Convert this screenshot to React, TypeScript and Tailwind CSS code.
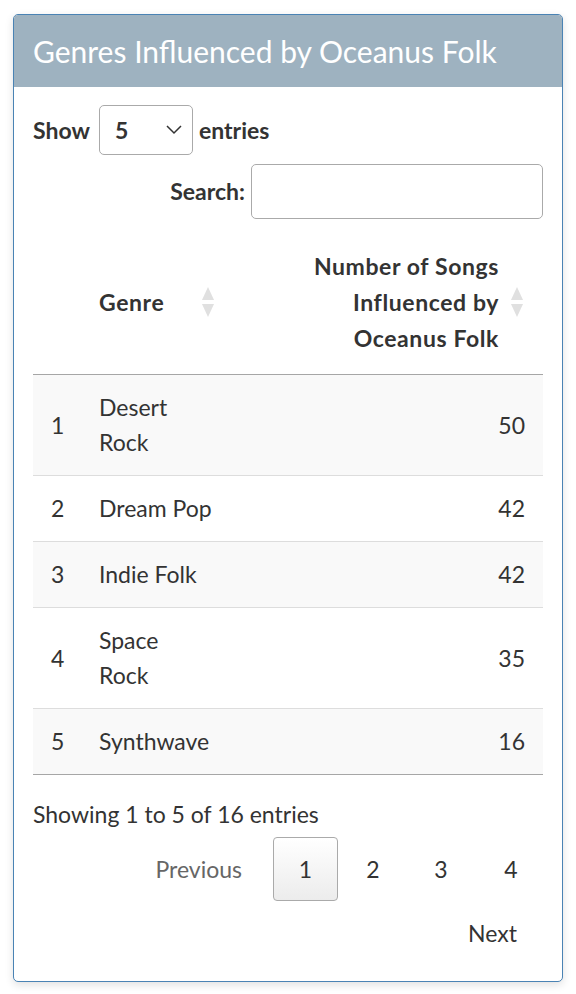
const rows = [
  { n: 1, genre: ["Desert", "Rock"], count: 50 },
  { n: 2, genre: ["Dream Pop"], count: 42 },
  { n: 3, genre: ["Indie Folk"], count: 42 },
  { n: 4, genre: ["Space", "Rock"], count: 35 },
  { n: 5, genre: ["Synthwave"], count: 16 },
]

function SortIcon() {
  return (
    <svg width="14" height="32" viewBox="0 0 14 32" className="shrink-0">
      <path d="M7 1 L13 14 L1 14 Z" fill="#e0e0e0" />
      <path d="M7 31 L13 18 L1 18 Z" fill="#e0e0e0" />
    </svg>
  )
}

export default function App() {
  return (
    <div className="min-h-[994px] bg-white px-[13px] pt-[14px] font-['Lato',sans-serif] text-[#333]">
      <div className="overflow-hidden rounded-[5px] border border-[#4a83b4] bg-white shadow-[0_3px_8px_rgba(0,0,0,0.12)]">
        <div className="flex h-[72px] items-center bg-[#9eb2c0] px-[19px]">
          <h2 className="text-[30px] font-normal text-white">Genres Influenced by Oceanus Folk</h2>
        </div>

        <div className="px-[19px] pb-[30px] pt-[18px] text-[23px]">
          <div className="flex items-center font-bold">
            <span>Show</span>
            <div className="ml-[9px] flex h-[50px] w-[94px] items-center justify-between rounded-[5px] border border-[#aaa] pl-[15px] pr-[10px]">
              <span>5</span>
              <svg width="16" height="10" viewBox="0 0 16 10">
                <path d="M1 1 L8 8 L15 1" fill="none" stroke="#333" strokeWidth="1.5" />
              </svg>
            </div>
            <span className="ml-[6px]">entries</span>
          </div>

          <div className="mt-[9px] flex items-center justify-end gap-[6px] font-bold">
            <span>Search:</span>
            <div className="h-[55px] w-[292px] rounded-[5px] border border-[#aaa]" />
          </div>

          <table className="mt-[19px] w-full border-collapse">
            <thead>
              <tr className="border-b border-[#a6a6a6]">
                <th className="w-[66px]" />
                <th className="pb-[18px] pt-[10px] text-left font-bold tracking-[0.6px]">
                  <div className="flex items-center">
                    <span className="w-[102px]">Genre</span>
                    <SortIcon />
                  </div>
                </th>
                <th className="pb-[18px] pr-[19px] pt-[10px] text-right font-bold leading-[36px] tracking-[0.6px]">
                  <div className="flex items-center justify-end gap-[11px]">
                    <span>
                      Number of Songs
                      <br />
                      Influenced by
                      <br />
                      Oceanus Folk
                    </span>
                    <SortIcon />
                  </div>
                </th>
              </tr>
            </thead>
            <tbody>
              {rows.map((r) => (
                <tr
                  key={r.n}
                  className={
                    r.n % 2 === 1
                      ? "border-b border-[#ddd] bg-[#f9f9f9] last:border-[#a6a6a6]"
                      : "border-b border-[#ddd] bg-white"
                  }
                >
                  <td className="py-[15px] pl-[18px] leading-[35px]">{r.n}</td>
                  <td className="py-[15px] leading-[35px]">
                    {r.genre.map((g) => (
                      <div key={g}>{g}</div>
                    ))}
                  </td>
                  <td className="py-[15px] pr-[18px] text-right leading-[35px]">{r.count}</td>
                </tr>
              ))}
            </tbody>
          </table>

          <div className="mt-[21px] leading-[36px]">Showing 1 to 5 of 16 entries</div>

          <div className="mt-[5px] flex items-center justify-end">
            <span className="pr-[31px] text-[#666]">Previous</span>
            <span className="flex h-[64px] w-[65px] items-center justify-center rounded-[4px] border border-[#aaa] bg-gradient-to-b from-white to-[#ececec]">
              1
            </span>
            <span className="ml-[1px] w-[68px] text-center">2</span>
            <span className="w-[68px] text-center">3</span>
            <span className="w-[68px] pl-[4px] text-center">4</span>
          </div>
          <div className="mt-[14px] flex justify-end pr-[26px] leading-[36px]">Next</div>
        </div>
      </div>
    </div>
  )
}
